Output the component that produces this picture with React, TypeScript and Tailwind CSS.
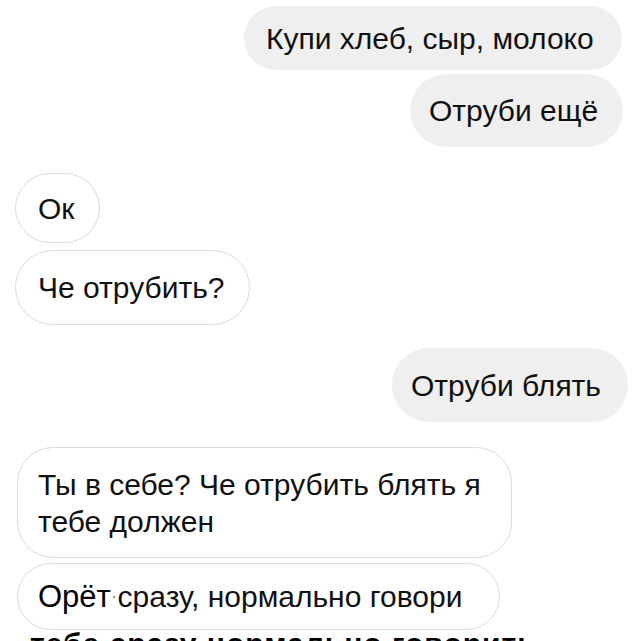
import React from 'react';

const font = { fontFamily: '"Liberation Sans", Arial, sans-serif' };

/**
 * Chat screenshot: grey bubbles are mine (right), outlined ones are theirs (left).
 */
const App: React.FC = () => {
    return (
        <div
            className="w-[640px] h-[641px] overflow-hidden bg-white text-[#111] text-[30px] leading-[37px] flex flex-col"
            style={font}
        >
            {/* Outgoing */}
            <div className="shrink-0 self-end mr-[18px] mt-[6px] w-[378px] h-[64px] rounded-full bg-[#efefef] flex items-center pl-[22px]">
                Купи хлеб, сыр, молоко
            </div>
            <div className="shrink-0 self-end mr-[17px] mt-[4px] w-[213px] h-[73px] rounded-full bg-[#efefef] flex items-center pl-[19px]">
                Отруби ещё
            </div>

            {/* Incoming */}
            <div className="shrink-0 self-start ml-[15px] mt-[26px] w-[85px] h-[70px] rounded-full border-[1.5px] border-[#dcdcdc] flex items-center pl-[22px]">
                Ок
            </div>
            <div className="shrink-0 self-start ml-[15px] mt-[7px] w-[235px] h-[75px] rounded-full border-[1.5px] border-[#dcdcdc] flex items-center pl-[22px]">
                Че отрубить?
            </div>

            <div className="shrink-0 self-end mr-[12px] mt-[23px] w-[236px] h-[74px] rounded-full bg-[#efefef] flex items-center pl-[19px]">
                Отруби блять
            </div>

            <div className="shrink-0 self-start ml-[17px] mt-[25px] w-[495px] h-[111px] rounded-[36px] border-[1.5px] border-[#dcdcdc] flex items-center pl-[20px] pr-[12px]">
                <p>Ты в себе? Че отрубить блять я тебе должен</p>
            </div>
            <div className="shrink-0 self-start ml-[17px] mt-[5px] w-[483px] h-[67px] rounded-full border-[1.5px] border-[#dcdcdc] flex items-center pl-[20px]">
                <span className="text-black text-[31px]">Орёт</span>
                <span className="text-[8px] text-[#888] mx-[2px]">•</span>
                <span>сразу, нормально говори</span>
            </div>

            {/* Next line, cut off by the bottom edge */}
            <div className="shrink-0 ml-[30px] -mt-[5px] text-black font-bold tracking-[1px] whitespace-nowrap">
                тебе сразу нормально говорить
            </div>
        </div>
    );
};

export default App;
